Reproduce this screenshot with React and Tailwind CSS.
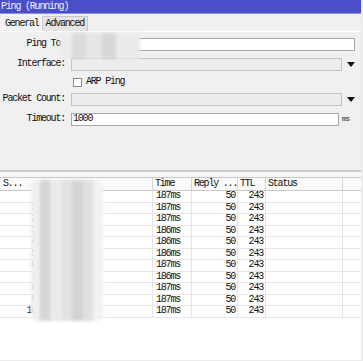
const FONT = { fontFamily: '"Liberation Mono", "DejaVu Sans Mono", monospace' }

const ROWS = [
  { seq: '', time: '187ms' },
  { seq: '1', time: '187ms' },
  { seq: '2', time: '187ms' },
  { seq: '3', time: '186ms' },
  { seq: '4', time: '186ms' },
  { seq: '5', time: '186ms' },
  { seq: '6', time: '187ms' },
  { seq: '7', time: '186ms' },
  { seq: '8', time: '187ms' },
  { seq: '9', time: '187ms' },
  { seq: '10', time: '187ms' },
]

const COLS = 'grid grid-cols-[153px_39px_46px_28px_77px_18px]'
const CELL = 'border-r flex items-center whitespace-nowrap overflow-hidden'

function Label({ children }) {
  return <div className="w-[65px] shrink-0 text-right whitespace-nowrap">{children}</div>
}

function Arrow() {
  return (
    <svg width="8" height="5" viewBox="0 0 8 5" className="ml-[5px]">
      <path d="M0 0h8L4 5z" fill="#111" />
    </svg>
  )
}

export default function App() {
  return (
    <div className="w-[363px] h-[361px] bg-[#ececec] overflow-hidden text-[10px] leading-none tracking-[-1.2px] text-[#111] relative" style={FONT}>
      <div className="w-[361px] h-[360px] flex flex-col bg-[#f0f0f0]">
        <div className="h-[14px] bg-[#4b4ec9] border-b border-[#8f92e0] text-[#eef] flex items-center px-[1px]">Ping (Running)</div>

        <div className="flex items-end h-[18px] px-[2px] border-b border-white">
          <div className="h-[16px] px-[2px] flex items-center bg-[#f0f0f0] border-t border-l border-r border-[#fafafa]">General</div>
          <div className="h-[15px] px-[3px] flex items-center bg-[#e4e4e4] border-t border-l border-r border-[#c8c8c8]">Advanced</div>
        </div>

        <div className="flex flex-col pt-[5px]">
          <div className="flex items-center h-[14px]">
            <Label>Ping To:</Label>
            <div className="ml-[6px] w-[284px] h-[13px] bg-white border border-[#a8a8a8]" />
          </div>
          <div className="flex items-center h-[14px] mt-[6px]">
            <Label>Interface:</Label>
            <div className="ml-[6px] w-[271px] h-[13px] bg-[#ededed] border border-[#c4c4c4]" />
            <Arrow />
          </div>
          <div className="flex items-center h-[12px] mt-[5px] pl-[73px] gap-[4px]">
            <div className="w-[9px] h-[9px] bg-white border border-[#8c8c8c]" />
            <span>ARP Ping</span>
          </div>
          <div className="flex items-center h-[14px] mt-[4px]">
            <Label>Packet Count:</Label>
            <div className="ml-[6px] w-[271px] h-[13px] bg-[#ededed] border border-[#c4c4c4]" />
            <Arrow />
          </div>
          <div className="flex items-center h-[14px] mt-[6px]">
            <Label>Timeout:</Label>
            <div className="ml-[6px] w-[268px] h-[13px] bg-white border border-[#a8a8a8] flex items-center pl-[1px]">1000</div>
            <span className="ml-[3px] text-[7px] tracking-[-0.5px]">ms</span>
          </div>
        </div>

        <div className="mt-[44px] border-t-2 border-[#cdcdcd] h-[7px] bg-[#f6f6f6]" />

        <div className="flex-1 bg-white flex flex-col">
          <div className={`${COLS} h-[14px] border-y border-[#c8c8c8] bg-[#fafafa]`}>
            <div className={`${CELL} border-[#d4d4d4] pl-[3px]`}>S...</div>
            <div className={`${CELL} border-[#d4d4d4] pl-[2px]`}>Time</div>
            <div className={`${CELL} border-[#d4d4d4] pl-[2px]`}>Reply ...</div>
            <div className={`${CELL} border-[#d4d4d4] pl-[2px]`}>TTL</div>
            <div className={`${CELL} border-[#d4d4d4] pl-[2px]`}>Status</div>
            <div />
          </div>
          {ROWS.map((r, i) => (
            <div key={i} className={`${COLS} h-[11.5px] border-b border-[#e6e6e6]`}>
              <div className={`${CELL} border-[#e6e6e6]`}>
                <span className="w-[36px] text-right">{r.seq}</span>
              </div>
              <div className={`${CELL} border-[#e6e6e6] pl-[3px]`}>{r.time}</div>
              <div className={`${CELL} border-[#e6e6e6] justify-end pr-[2px]`}>50</div>
              <div className={`${CELL} border-[#e6e6e6] justify-end pr-[2px]`}>243</div>
              <div className="border-r border-[#e6e6e6]" />
              <div />
            </div>
          ))}
        </div>
      </div>

      <div className="absolute left-[60px] top-[33px] w-[80px] h-[26px] flex blur-[1.5px]">
        <div className="w-[12px] bg-[#ececec]" />
        <div className="w-[14px] bg-[#dadada]" />
        <div className="w-[16px] bg-[#e6e6e6]" />
        <div className="w-[14px] bg-[#d8d8d8]" />
        <div className="w-[24px] bg-[#ebebeb]" />
      </div>
      <div className="absolute left-[31px] top-[180px] w-[72px] h-[141px] flex blur-[1.5px] rounded-[6px] overflow-hidden">
        <div className="w-[9px] bg-[#efefef]" />
        <div className="w-[10px] bg-[#d6d6d6]" />
        <div className="w-[12px] bg-[#eaeaea]" />
        <div className="w-[10px] bg-[#e2e2e2]" />
        <div className="w-[11px] bg-[#d4d4d4]" />
        <div className="w-[10px] bg-[#e0e0e0]" />
        <div className="w-[10px] bg-[#f2f2f2]" />
      </div>
    </div>
  )
}
